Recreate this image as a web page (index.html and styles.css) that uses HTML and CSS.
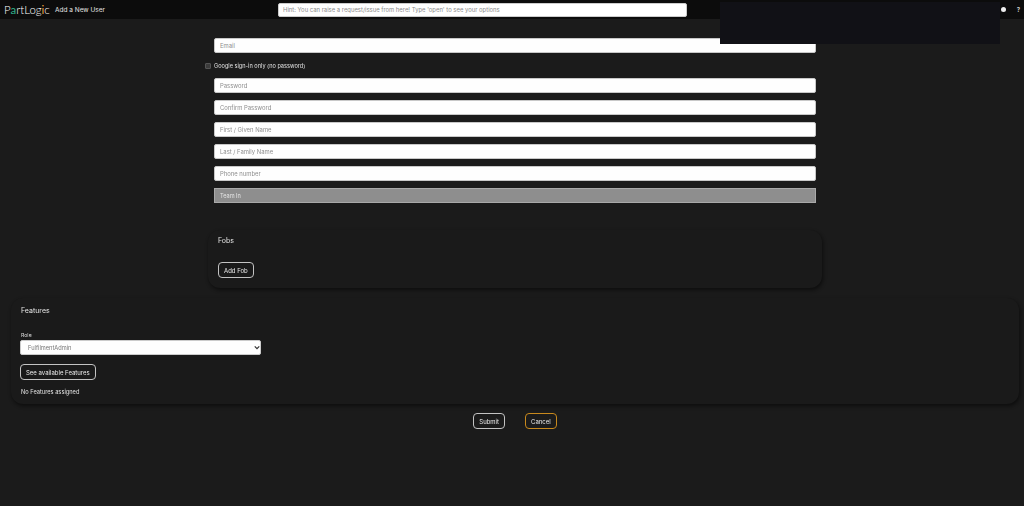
FILE: index.html
```html
<!DOCTYPE html>
<html lang="en">
<head>
<meta charset="utf-8">
<title>Add a New User</title>
<link rel="stylesheet" href="styles.css">
</head>
<body>
<header class="topbar">
  <div class="brand">
    <span class="logo">P<span class="logo-a">a</span>rtLog<span class="logo-i">i</span>c</span>
    <span class="page-title">Add a New User</span>
  </div>
  <input class="hint" type="text" placeholder="Hint: You can raise a request/issue from here! Type 'open' to see your options">
  <div class="top-icons">
    <span class="dot"></span>
    <span class="help">?</span>
  </div>
</header>
<div class="redaction"></div>
<main class="page">
  <form class="fields">
    <input class="field" type="text" placeholder="Email">
    <label class="check-row"><input class="check" type="checkbox"><span>Google sign-in only (no password)</span></label>
    <div class="stack">
      <input class="field" type="password" placeholder="Password">
      <input class="field" type="password" placeholder="Confirm Password">
      <input class="field" type="text" placeholder="First / Given Name">
      <input class="field" type="text" placeholder="Last / Family Name">
      <input class="field" type="text" placeholder="Phone number">
      <div class="field field-disabled">Team In</div>
    </div>
  </form>
  <section class="card card-fobs">
    <h2 class="card-title fobs-title">Fobs</h2>
    <button class="btn" type="button">Add Fob</button>
  </section>
  <section class="card card-features">
    <h2 class="card-title indent">Features</h2>
    <label class="role-label indent" for="role">Role</label>
    <div class="role-wrap">
      <select class="role" id="role"><option>FulfilmentAdmin</option></select>
      <svg class="chevron" viewBox="0 0 8 6" aria-hidden="true"><path d="M1 1.5 4 4.5 7 1.5" fill="none" stroke="#333" stroke-width="1.6"/></svg>
    </div>
    <button class="btn btn-features" type="button">See available Features</button>
    <p class="none indent">No Features assigned</p>
  </section>
  <div class="actions">
    <button class="btn" type="button">Submit</button>
    <button class="btn btn-cancel" type="button">Cancel</button>
  </div>
</main>
</body>
</html>
```
FILE: styles.css
```css
* { box-sizing: border-box; }
html, body { margin: 0; height: 506px; overflow: hidden; }
body { background: #1b1b1b; color: #e8e8e8; font-family: "Inter", "Liberation Sans", sans-serif; font-size: 6px; position: relative; }

.topbar { height: 19px; background: #0c0c0c; display: flex; align-items: center; position: relative; opacity: .999; }
.brand { width: 278px; display: flex; align-items: center; padding-left: 4px; flex: none; }
.logo { font-family: "Lato", sans-serif; font-weight: 300; font-size: 11.4px; color: #fff; line-height: 19px; width: 51px; flex: none; }
.logo-a { color: #2fb38a; font-weight: 400; }
.logo-i { color: #e9a23b; font-weight: 400; }
.page-title { font-size: 6.5px; color: #e4e4e4; }
.hint { width: 409px; height: 14px; border: 1px solid #ccc; border-radius: 2px; background: #fff; padding: 0 4px; font: 5.9px "Inter", sans-serif; flex: none; }
.hint::placeholder { color: #8c8c8c; }
.top-icons { position: absolute; right: 0; top: 0; height: 19px; display: flex; align-items: center; }
.dot { width: 5px; height: 5px; border-radius: 50%; background: #eee; margin-right: 11px; }
.help { font-size: 6px; font-weight: 700; color: #ccc; margin-right: 4px; }
.redaction { position: absolute; left: 720px; top: 2px; width: 280px; height: 42px; background: #111116; z-index: 1; }

.page { display: flex; flex-direction: column; align-items: center; padding-left: 6px; opacity: .999; }
.fields { width: 622px; padding: 19px 0 0 9px; margin-left: 2px; }
.field { display: block; width: 602px; height: 15px; border: 1px solid #c9c9c9; border-radius: 2px; background: #fff; padding: 0 5px; font: 5.9px "Inter", sans-serif; outline: none; }
.field::placeholder { color: #8f8f8f; }
.check-row { display: flex; align-items: center; height: 10px; margin: 8px 0 7px -9px; font-size: 5.6px; color: #e4e4e4; gap: 3px; }
.check { width: 6px; height: 6px; margin: 0; appearance: none; background: #3c3c3c; border: 1px solid #555; border-radius: 1px; }
.stack { display: flex; flex-direction: column; gap: 7px; }
.field-disabled { background: #8f8f8f; border-color: #aaa; color: #e6e6e6; font-size: 5.6px; line-height: 14px; border-radius: 0; }

.card { background: #1b1b1b; border-radius: 12px; box-shadow: 1px 2px 4px rgba(0,0,0,.55); display: flex; flex-direction: column; align-items: flex-start; }
.card-title { margin: 0; font-weight: 400; color: #e4e4e4; }
.indent { margin-left: 1px; }
.card-fobs { width: 614px; height: 58px; margin-top: 27px; padding: 6px 10px; }
.fobs-title { font-size: 7px; line-height: 9px; }
.card-fobs .btn { margin-top: 17px; }
.card-features { width: 1008px; height: 106px; margin-top: 10px; padding: 8px 9px; }
.card-features .card-title { font-size: 7px; line-height: 9px; }
.role-label { font-size: 5.2px; line-height: 6px; margin-top: 17px; color: #ddd; }
.role-wrap { position: relative; width: 241px; height: 15px; margin-top: 2px; }
.role { width: 100%; height: 100%; display: block; appearance: none; border: 1px solid #ccc; border-radius: 2px; background: #fff; color: #777; font: 5.7px "Inter", sans-serif; padding: 0 7px; }
.chevron { position: absolute; right: 1px; top: 5px; width: 6px; height: 5px; }
.btn-features { margin-top: 9px; padding: 0 6px; font-size: 6.4px; }
.none { margin-top: 7px; margin-bottom: 0; font-size: 5.7px; line-height: 9px; color: #e4e4e4; }

.btn { height: 16px; border: 1px solid #c4c4c4; border-radius: 4px; background: transparent; color: #eaeaea; font: 6px "Inter", sans-serif; padding: 0 5px; }
.actions { display: flex; gap: 20px; margin-top: 9px; }
.btn-cancel { border-color: #c98a1e; }
```
